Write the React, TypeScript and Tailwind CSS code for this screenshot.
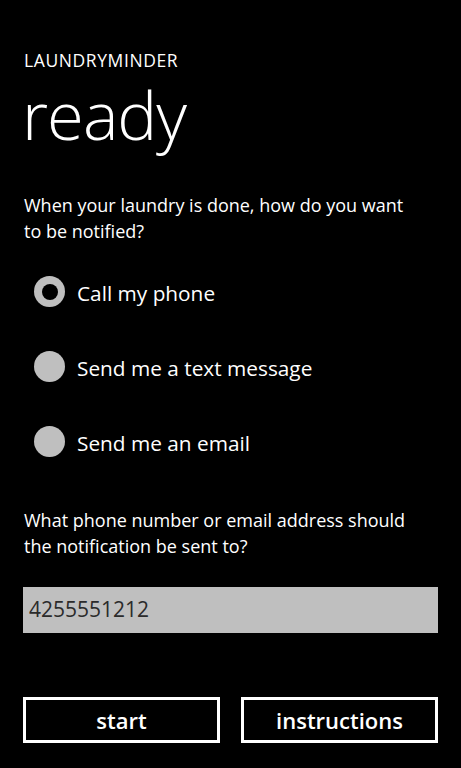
import React from "react";

function Radio({ checked }: { checked?: boolean }) {
  return (
    <div className="w-[31px] h-[31px] rounded-full bg-[#bfbfbf] flex items-center justify-center shrink-0">
      {checked && <div className="w-[16px] h-[16px] rounded-full bg-black" />}
    </div>
  );
}

export default function App() {
  const options = [
    { label: "Call my phone", checked: true },
    { label: "Send me a text message" },
    { label: "Send me an email" },
  ];
  return (
    <div
      className="w-full h-[768px] bg-black text-white overflow-hidden"
      style={{ fontFamily: '"Open Sans", "Noto Sans", sans-serif' }}
    >
      <div className="pl-[24px] pr-[23px]">
        <div className="pt-[50px] text-[17.5px] leading-[20px] tracking-[0.6px]">LAUNDRYMINDER</div>
        <div className="mt-[4px] text-[67px] leading-[80px] font-light tracking-[-1px] -ml-[2px]">ready</div>
        <div className="mt-[38px] text-[18px] leading-[26px] pr-[20px]">
          When your laundry is done, how do you want to be notified?
        </div>
        <div className="mt-[10px] flex flex-col pl-[10px]">
          {options.map((o) => (
            <div key={o.label} className="h-[75px] flex items-center gap-[12px]">
              <Radio checked={o.checked} />
              <span className="text-[20.8px] leading-[28px] pt-[2px]">{o.label}</span>
            </div>
          ))}
        </div>
        <div className="mt-[28px] text-[18px] leading-[26px] pr-[20px]">
          What phone number or email address should the notification be sent to?
        </div>
        <div className="mt-[28px] -ml-[1px] h-[46px] bg-[#bfbfbf] flex items-center px-[6px] text-[21px] text-[#2b2b2b]">
          4255551212
        </div>
        <div className="mt-[64px] -ml-[1px] flex gap-[21px]">
          <div className="flex-1 h-[46px] border-[3px] border-white flex items-center justify-center text-[22px] font-semibold">
            start
          </div>
          <div className="flex-1 h-[46px] border-[3px] border-white flex items-center justify-center text-[22px] font-semibold">
            instructions
          </div>
        </div>
      </div>
    </div>
  );
}
